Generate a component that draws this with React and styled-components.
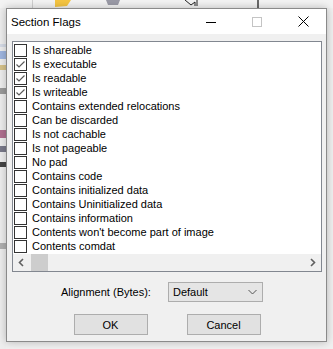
import React from 'react';
import styled, { createGlobalStyle } from 'styled-components';

const Global = createGlobalStyle`
  html, body { margin: 0; padding: 0; }
  body {
    width: 333px; height: 349px; overflow: hidden;
    background: #f0f0f0;
    font-family: "Liberation Sans", Arial, sans-serif;
  }
`;

const Desktop = styled.div`
  position: relative;
  width: 333px;
  height: 349px;
  overflow: hidden;
  background: #f0f0f0;
  display: grid;
  grid-template-rows: 8px 1fr 8px;
`;

const TopStrip = styled.div`
  display: flex;
  align-items: stretch;
  background: #f3f3f3;
`;

const Seg = styled.div`
  width: ${p => p.w}px;
  border-right: ${p => p.line || 'none'};
  display: flex;
  justify-content: center;
  align-items: flex-start;
`;

const Middle = styled.div`
  display: flex;
  justify-content: space-between;
`;

const SideLeft = styled.div`
  width: 6px;
  background: #eeeeee;
  display: flex;
  flex-direction: column;
  padding-top: 36px;
`;

const SideMark = styled.div`
  height: ${p => p.h}px;
  background: ${p => p.c};
  margin-top: ${p => p.mt || 0}px;
`;

const SideRight = styled.div`
  width: 6px;
  background: #e8e8e8;
  display: flex;
  flex-direction: column;
`;

const BottomStrip = styled.div`
  display: flex;
  background: #f0f0f0;
`;

const BotCell = styled.div`
  width: ${p => p.w}px;
  background: ${p => p.bg || 'transparent'};
  border-left: ${p => p.bl || 'none'};
  font-size: 12px;
  line-height: 14px;
  overflow: hidden;
  color: ${p => p.color || '#000'};
  font-weight: ${p => p.fw || 400};
  padding-left: ${p => p.pl || 0}px;
  padding-top: 3px;
  white-space: nowrap;
`;

const Window = styled.div`
  position: absolute;
  left: 6px;
  top: 8px;
  width: 321px;
  height: 334px;
  box-sizing: border-box;
  border: 1px solid #8a8a8a;
  background: #f0f0f0;
  box-shadow: 0 0 8px rgba(0,0,0,0.25);
  display: flex;
  flex-direction: column;
`;

const TitleBar = styled.div`
  height: 25px;
  background: #ffffff;
  display: flex;
  align-items: center;
  padding-left: 4px;
`;

const Title = styled.div`
  flex: 1;
  font-size: 11.5px;
  color: #000;
  padding-top: 1px;
`;

const Caption = styled.div`
  width: 46px;
  height: 25px;
  display: flex;
  align-items: center;
  justify-content: center;
`;

const Body = styled.div`
  flex: 1;
  display: flex;
  flex-direction: column;
  padding: 7px 4px 0 5px;
`;

const ListBox = styled.div`
  height: 231px;
  box-sizing: border-box;
  border: 1px solid #828790;
  background: #fff;
  display: flex;
  flex-direction: column;
`;

const Rows = styled.div`
  flex: 1;
  padding-top: 1px;
  overflow: hidden;
`;

const Row = styled.div`
  height: 14px;
  line-height: 14px;
  display: flex;
  align-items: center;
  padding-left: 1px;
  gap: 5px;
  font-size: 11px;
  color: #000;
  white-space: nowrap;
`;

const Box = styled.span`
  width: 13px;
  height: 13px;
  box-sizing: border-box;
  border: 1px solid #333;
  background: #fff;
  display: inline-flex;
  flex: none;
`;

const HScroll = styled.div`
  height: 17px;
  background: #f0f0f0;
  display: flex;
  align-items: stretch;
`;

const Arrow = styled.div`
  width: 17px;
  display: flex;
  align-items: center;
  justify-content: center;
`;

const Track = styled.div`
  flex: 1;
  display: flex;
  align-items: stretch;
  padding: 0 0 0 1px;
`;

const Thumb = styled.div`
  width: 17px;
  background: #cdcdcd;
`;

const AlignRow = styled.div`
  margin-top: 10px;
  display: flex;
  align-items: center;
  padding-left: 49px;
  gap: 20px;
  font-size: 11px;
`;

const Label = styled.span`
  width: 87px;
  white-space: nowrap;
`;

const Select = styled.div`
  width: 95px;
  height: 20px;
  box-sizing: border-box;
  border: 1px solid #adadad;
  background: #e5e5e5;
  display: flex;
  align-items: center;
  justify-content: space-between;
  padding: 0 5px 0 4px;
  font-size: 11px;
`;

const Buttons = styled.div`
  margin-top: 12px;
  display: flex;
  justify-content: center;
  gap: 39px;
`;

const Button = styled.button`
  width: 74px;
  height: 21px;
  box-sizing: border-box;
  border: 1px solid #adadad;
  background: #e1e1e1;
  font-family: inherit;
  font-size: 11px;
  color: #000;
  padding: 0;
  display: flex;
  align-items: center;
  justify-content: center;
`;

const flags = [
  ['Is shareable', false],
  ['Is executable', true],
  ['Is readable', true],
  ['Is writeable', true],
  ['Contains extended relocations', false],
  ['Can be discarded', false],
  ['Is not cachable', false],
  ['Is not pageable', false],
  ['No pad', false],
  ['Contains code', false],
  ['Contains initialized data', false],
  ['Contains Uninitialized data', false],
  ['Contains information', false],
  ["Contents won't become part of image", false],
  ['Contents comdat', false],
];

const Check = ({ on }) => (
  <Box>
    {on && (
      <svg width="11" height="11" viewBox="0 0 11 11">
        <polyline points="1.5,5.5 4,8 9.5,2.5" fill="none" stroke="#5a5a5a" strokeWidth="1.2" />
      </svg>
    )}
  </Box>
);

export default function App() {
  return (
    <>
      <Global />
      <Desktop>
        <TopStrip>
          <Seg w={32} line="1px solid #cfcfcf" />
          <Seg w={60}>
            <svg width="20" height="8" viewBox="0 0 20 8"><path d="M2 0 L18 0 L14 6 L2 7 Z" fill="#f5c542" /></svg>
          </Seg>
          <Seg w={40}>
            <svg width="16" height="8" viewBox="0 0 16 8"><path d="M1 0 L15 0 L13 5 L3 5 Z" fill="#9a9aa6" /></svg>
          </Seg>
          <Seg w={124} line="2px solid #6a6a6a">
            <svg width="24" height="8" viewBox="0 0 24 8"><path d="M2 0 L8 5 L12 2 L12 6 M14 0 L14 6" fill="none" stroke="#222" strokeWidth="1" /></svg>
          </Seg>
          <Seg w={75} />
        </TopStrip>
        <Middle>
          <SideLeft>
            <SideMark h={3} c="#d5dbe6" />
            <SideMark h={8} c="#9fb6e0" mt={4} />
            <SideMark h={5} c="#d6c28a" mt={6} />
            <SideMark h={6} c="#9a9a9a" mt={18} />
            <SideMark h={8} c="#b07090" mt={36} />
            <SideMark h={6} c="#7a7a8a" mt={8} />
            <SideMark h={5} c="#444" mt={10} />
            <SideMark h={6} c="#b0b0b0" mt={76} />
          </SideLeft>
          <SideRight>
            <SideMark h={1} c="#c8c8c8" mt={40} />
            <SideMark h={1} c="#c8c8c8" mt={30} />
            <SideMark h={1} c="#c8c8c8" mt={24} />
            <SideMark h={24} c="#a7b8d6" mt={14} />
            <SideMark h={12} c="#b8b8b8" />
            <SideMark h={8} c="#d8d8d8" />
            <SideMark h={8} c="#2a2aa0" mt={18} />
            <SideMark h={10} c="#c8b070" mt={150} />
          </SideRight>
        </Middle>
        <BottomStrip>
          <BotCell w={33} />
          <BotCell w={8} bg="#fff" bl="1px solid #000" />
          <BotCell w={214} bg="#fff" bl="1px solid #000" fw={700} pl={44}>Rebuilder</BotCell>
          <BotCell w={7} bl="1px solid #000" />
          <BotCell w={71} bg="#fff" bl="1px solid #000" color="#1a1aff" pl={7}>Offset</BotCell>
        </BottomStrip>

        <Window>
          <TitleBar>
            <Title>Section Flags</Title>
            <Caption>
              <svg width="10" height="10" viewBox="0 0 10 10"><line x1="0" y1="5.5" x2="10" y2="5.5" stroke="#000" strokeWidth="1" /></svg>
            </Caption>
            <Caption>
              <svg width="10" height="10" viewBox="0 0 10 10"><rect x="0.5" y="0.5" width="9" height="9" fill="none" stroke="#c4c4c4" strokeWidth="1" /></svg>
            </Caption>
            <Caption>
              <svg width="11" height="11" viewBox="0 0 11 11"><path d="M0.5 0.5 L10.5 10.5 M10.5 0.5 L0.5 10.5" stroke="#000" strokeWidth="1" /></svg>
            </Caption>
          </TitleBar>
          <Body>
            <ListBox>
              <Rows>
                {flags.map(([label, on]) => (
                  <Row key={label}>
                    <Check on={on} />
                    <span>{label}</span>
                  </Row>
                ))}
              </Rows>
              <HScroll>
                <Arrow>
                  <svg width="7" height="9" viewBox="0 0 7 9"><polyline points="5,1 1.5,4.5 5,8" fill="none" stroke="#606060" strokeWidth="1.6" /></svg>
                </Arrow>
                <Track><Thumb /></Track>
                <Arrow>
                  <svg width="7" height="9" viewBox="0 0 7 9"><polyline points="2,1 5.5,4.5 2,8" fill="none" stroke="#606060" strokeWidth="1.6" /></svg>
                </Arrow>
              </HScroll>
            </ListBox>
            <AlignRow>
              <Label>Alignment (Bytes):</Label>
              <Select>
                <span>Default</span>
                <svg width="9" height="6" viewBox="0 0 9 6"><polyline points="0.5,1 4.5,5 8.5,1" fill="none" stroke="#555" strokeWidth="1" /></svg>
              </Select>
            </AlignRow>
            <Buttons>
              <Button>OK</Button>
              <Button>Cancel</Button>
            </Buttons>
          </Body>
        </Window>
      </Desktop>
    </>
  );
}
